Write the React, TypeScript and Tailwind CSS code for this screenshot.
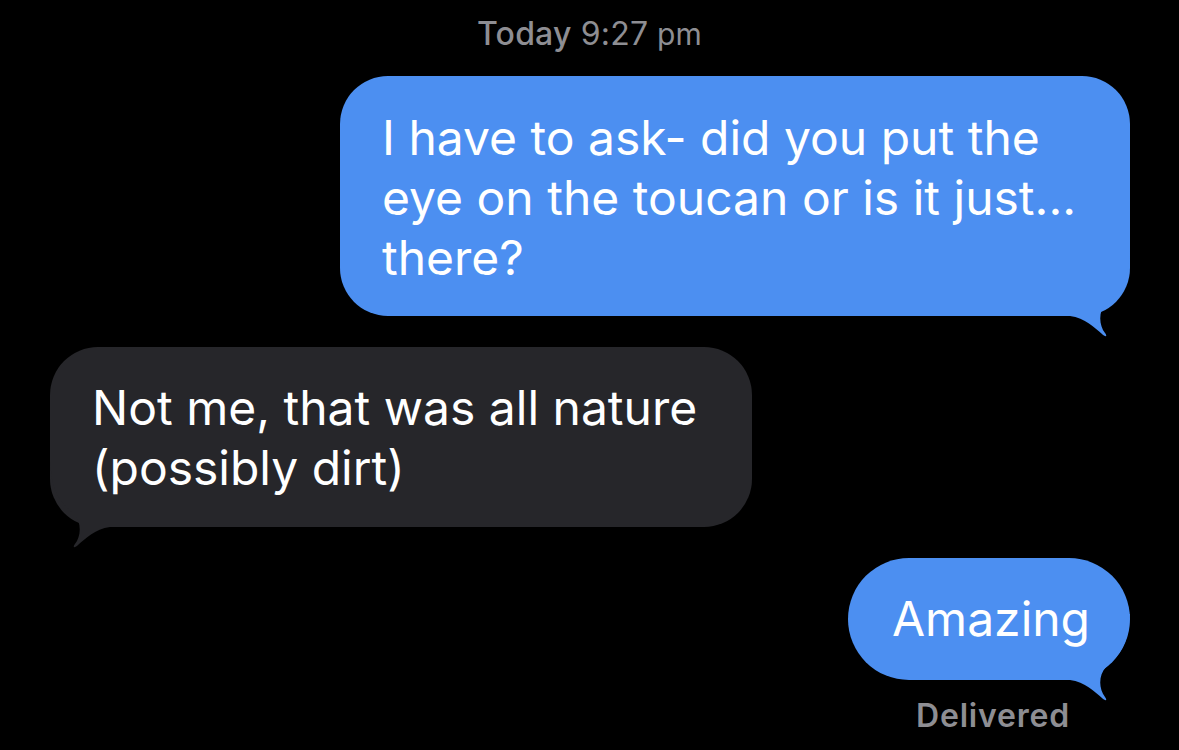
import React from 'react'

const BLUE = '#4c8ff1'

function Tail({ color, side }: { color: string; side: 'left' | 'right' }) {
  return (
    <svg
      width="90"
      height="90"
      viewBox="0 0 90 90"
      className={
        side === 'right'
          ? 'absolute right-0 bottom-[-24px]'
          : 'absolute left-0 bottom-[-24px] -scale-x-100'
      }
      aria-hidden
    >
      <path
        fill={color}
        d="M0 0 L0 66 L30 66 C45 68 55 78 62 84 C65 87 68 87 65 83 C59 75 58 62 66 53 C75 45 87 35 89 10 L90 0 Z"
      />
    </svg>
  )
}

export default function App() {
  return (
    <div
      className="w-[1179px] h-[750px] bg-black flex flex-col overflow-hidden"
      style={{ fontFamily: 'Inter, "Noto Sans", sans-serif' }}
    >
      {/* timestamp */}
      <div className="pt-[14px] text-center text-[32px] leading-[40px] text-[#8e8e93] tracking-[0.2px]">
        <span className="font-medium">Today</span> 9:27<span className="text-[30px]"> pm</span>
      </div>

      {/* sent */}
      <div className="flex justify-end pr-[49px] mt-[22px]">
        <div
          className="relative w-[790px] rounded-[48px] pl-[42px] pr-[30px] pt-[32px] pb-[28px] text-white text-[48px] leading-[60px] whitespace-nowrap"
          style={{ background: BLUE }}
        >
          <span className="relative z-10">
            I have to ask- did you put the
            <br />
            eye on the toucan or is it just...
            <br />
            there?
          </span>
          <Tail color={BLUE} side="right" />
        </div>
      </div>

      {/* received */}
      <div className="flex justify-start pl-[50px] mt-[31px]">
        <div className="relative w-[702px] rounded-[48px] bg-[#26262a] pl-[42px] pr-[30px] pt-[31px] pb-[29px] text-white text-[48px] leading-[60px] whitespace-nowrap">
          <span className="relative z-10">
            Not me, that was all nature
            <br />
            (possibly dirt)
          </span>
          <Tail color="#26262a" side="left" />
        </div>
      </div>

      {/* sent */}
      <div className="flex justify-end pr-[49px] mt-[31px]">
        <div
          className="relative w-[282px] rounded-[61px] pl-[44px] pt-[31px] pb-[31px] text-white text-[48px] leading-[60px] whitespace-nowrap"
          style={{ background: BLUE }}
        >
          <span className="relative z-10">Amazing</span>
          <Tail color={BLUE} side="right" />
        </div>
      </div>

      <div className="flex justify-end pr-[109px] mt-[18px] text-[32px] leading-[36px] font-semibold tracking-[0.8px] text-[#8e8e93]">
        Delivered
      </div>
    </div>
  )
}
